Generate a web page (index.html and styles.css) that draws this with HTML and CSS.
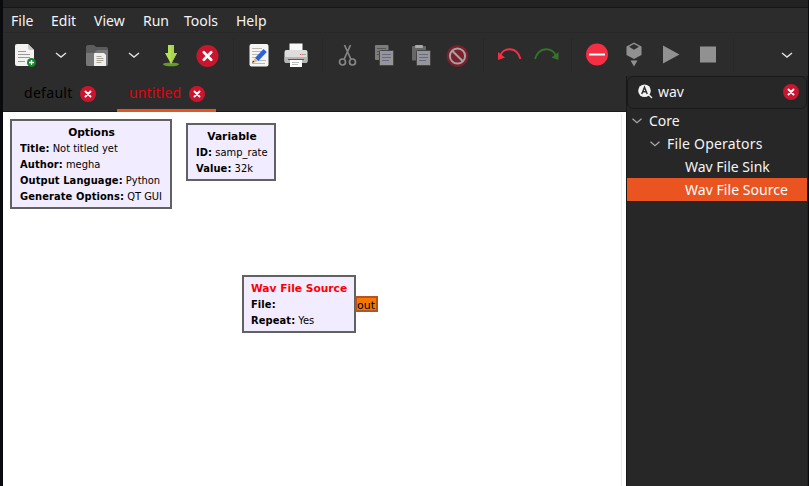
FILE: index.html
```html
<!DOCTYPE html>
<html lang="en">
<head>
<meta charset="utf-8">
<title>Flowgraph editor</title>
<link rel="stylesheet" href="styles.css">
</head>
<body>
<div class="window">
  <div class="titlebar"></div>
  <nav class="menu">
    <span class="m-file">File</span><span class="m-edit">Edit</span><span class="m-view">View</span><span class="m-run">Run</span><span class="m-tools">Tools</span><span class="m-help">Help</span>
  </nav>
  <div class="toolbar">
    <svg viewBox="0 0 28 28"><path d="M6 3h11l6 6v14q0 2-2 2H6q-2 0-2-2V5q0-2 2-2z" fill="#f3f3f2"/><path d="M17 3v4q0 2 2 2h4z" fill="#c9c9c7"/><path d="M7 10.500h8M7 13.500h12M7 16.500h12M7 20.500h7" stroke="#999" fill="none"/><circle cx="20.500" cy="21.500" r="4.500" fill="#12852a"/><path d="M20.500 19v5M18 21.500h5" stroke="#fff" stroke-width="1.300"/></svg>
    <svg viewBox="0 0 28 28"><path class="chev" d="M9 12l5 4 5-4"/></svg>
    <svg viewBox="0 0 28 28"><path d="M3 6q0-2 2-2h6l2 2h10q2 0 2 2v15q0 2-2 2H5q-2 0-2-2z" fill="#5c5c5c"/><path d="M3 12h8l3-3h11v14q0 2-2 2H5q-2 0-2-2z" fill="#787878"/><path d="M12 12h9l2 2v11H11V13q0-1 1-1z" fill="#efefed"/><path d="M13.500 15.500h5M13.500 17.500h7M13.500 19.500h7M13.500 21.500h5" stroke="#aaa496"/></svg>
    <svg viewBox="0 0 28 28"><path class="chev" d="M9 12l5 4 5-4"/></svg>
    <svg viewBox="0 0 28 28"><ellipse cx="14" cy="23.300" rx="8" ry="1.900" fill="#659b2b"/><path d="M11 4h6v8h3l-6 11-6-11h3z" fill="#b6df55"/><path d="M14 4h3v8h3l-6 11z" fill="#a9d64b"/></svg>
    <svg viewBox="0 0 28 28"><circle cx="13.500" cy="15" r="11" fill="#c9162e"/><path d="M9.800 11.300l7.400 7.400m0-7.400l-7.400 7.400" stroke="#fff" stroke-width="2.700" stroke-linecap="round"/></svg>
    <i class="sep"></i>
    <svg viewBox="0 0 28 28"><rect x="4.500" y="3" width="19" height="22.500" rx="2" fill="#f5f5f4"/><path d="M7 7.500h10M7 10.500h12M7 13.500h10M7 16.500h9M13 19.500h8M7 22.500h13" stroke="#bdb8ad"/><path d="M10 17l8.500-9 3.300 3-8.500 9z" fill="#2962d9"/><path d="M10 17l3.300 3-6.300 1.800z" fill="#efb66f"/><path d="M7 21.800l1-2.200 1.500 1.500z" fill="#333"/></svg>
    <svg viewBox="0 0 28 28"><rect x="7.500" y="2.500" width="13" height="9" fill="#fafafa"/><rect x="2.500" y="9" width="23" height="13" rx="2" fill="#ddd"/><path d="M2.500 16h23v4q0 2-2 2h-19q-2 0-2-2z" fill="#b5b5b4"/><path d="M6 18.500h16" stroke="#555"/><path d="M8 19h12v7H8z" fill="#fff"/><path d="M10 21.500h7M10 23.500h6" stroke="#bbb"/><path d="M18 13.500h1.300m1 0h1.300" stroke="#df5757"/><path d="M22.400 13.500h1.300" stroke="#43a85b"/></svg>
    <i class="sep"></i>
    <svg viewBox="0 0 28 28" fill="none" stroke="#858585" stroke-width="1.700"><circle cx="9.500" cy="21" r="3"/><circle cx="19.500" cy="21" r="3"/><path d="M11 18.500L17.500 4M18 18.500L11.500 4"/></svg>
    <svg viewBox="0 0 28 28"><rect x="5" y="4" width="13.500" height="15" rx="1" fill="#7c7c7c"/><path d="M7 7.500h9M7 10.500h4M7 13.500h3" stroke="#555"/><rect x="9.500" y="9.500" width="14" height="15" rx="1" fill="#969696" stroke="#454545"/><path d="M12 13.500h9M12 16.500h9M12 19.500h7" stroke="#68688f"/></svg>
    <svg viewBox="0 0 28 28"><rect x="5" y="5" width="14" height="14.500" rx="1" fill="#676767"/><rect x="8" y="4" width="8" height="3" rx="1" fill="#aaa"/><rect x="9.500" y="9.500" width="14" height="15" rx="1" fill="#969696" stroke="#454545"/><path d="M12 13.500h9M12 16.500h9M12 19.500h7" stroke="#68688f"/></svg>
    <svg viewBox="0 0 28 28"><circle cx="13.500" cy="15" r="10.800" fill="#7d202b"/><circle cx="13.500" cy="15" r="7.600" fill="none" stroke="#a3a3a3" stroke-width="2"/><path d="M8.200 9.700l10.600 10.600" stroke="#a3a3a3" stroke-width="2"/></svg>
    <i class="sep"></i>
    <svg viewBox="0 0 28 28"><path d="M5 15C8 6 22 5 25.500 18" fill="none" stroke="#f52e43" stroke-width="1.900"/><path d="M3 11v8l7-2.500z" fill="#f52e43"/></svg>
    <svg viewBox="0 0 28 28"><path d="M24 15C21 6 7 5 3 18" fill="none" stroke="#357329" stroke-width="1.900"/><path d="M26.500 11v8l-7-2.500z" fill="#357329"/></svg>
    <i class="sep"></i>
    <svg viewBox="0 0 28 28"><circle cx="14" cy="13.500" r="11" fill="#f52e43"/><rect x="6" y="12.500" width="16" height="2" fill="#fff"/></svg>
    <svg viewBox="0 0 28 28"><path d="M14 1.500l7.500 4V14L14 18l-7.500-4V5.500z" fill="#919191"/><path d="M14 3l5 2.800-5 2.900-5-2.900z" fill="#303030"/><path d="M10.500 19.500h7L14 25.500z" fill="#919191"/></svg>
    <svg viewBox="0 0 28 28"><path d="M6 4.500l16.500 9L6 22.500z" fill="#919191"/></svg>
    <svg viewBox="0 0 28 28"><rect x="6" y="5.500" width="16" height="16" fill="#919191"/></svg>
    <i class="sep"></i>
    <svg class="more" viewBox="0 0 28 28"><path class="chev" d="M9 12l5 4 5-4"/></svg>
  </div>
  <div class="main">
    <main class="editor">
      <div class="tabs">
        <div class="tab tab-default"><span>default</span><svg class="close" viewBox="0 0 16 16"><circle cx="8" cy="8" r="8" fill="#c9162e"/><path d="M5.500 5.500l5 5m0-5l-5 5" stroke="#fff" stroke-width="1.900" stroke-linecap="round"/></svg></div>
        <div class="tab tab-active"><span>untitled</span><svg class="close" viewBox="0 0 16 16"><circle cx="8" cy="8" r="8" fill="#c9162e"/><path d="M5.500 5.500l5 5m0-5l-5 5" stroke="#fff" stroke-width="1.900" stroke-linecap="round"/></svg></div>
      </div>
      <div class="canvas">
        <section class="block options"><h2>Options</h2><p><b>Title:</b> Not titled yet</p><p><b>Author:</b> megha</p><p><b>Output Language:</b> Python</p><p><b>Generate Options:</b> QT GUI</p></section>
        <section class="block variable"><h2>Variable</h2><p><b>ID:</b> samp_rate</p><p><b>Value:</b> 32k</p></section>
        <section class="block source"><h2>Wav File Source</h2><p><b>File:</b></p><p><b>Repeat:</b> Yes</p></section>
        <div class="port">out</div>
        <div class="scroll-edge"></div>
      </div>
    </main>
    <aside class="panel">
      <div class="search">
        <svg class="glass" viewBox="0 0 16 16"><path d="M10 10l4 4" stroke="#eee" stroke-width="1.500"/><circle cx="6.500" cy="6.800" r="6.300" fill="#f4f4f4"/><path d="M3.800 10L6.500 3.300 9.200 10M4.900 7.800h3.200" fill="none" stroke="#333" stroke-width="1.500"/></svg>
        <span class="query">wav</span>
        <svg class="close" viewBox="0 0 16 16"><circle cx="8" cy="8" r="8" fill="#c9162e"/><path d="M5.500 5.500l5 5m0-5l-5 5" stroke="#fff" stroke-width="1.900" stroke-linecap="round"/></svg>
      </div>
      <div class="row core"><svg viewBox="0 0 10 6"><path d="M.5.700L5 4.700 9.500.700"/></svg><span>Core</span></div>
      <div class="row ops"><svg viewBox="0 0 10 6"><path d="M.5.700L5 4.700 9.500.700"/></svg><span>File Operators</span></div>
      <div class="row leaf sink"><span>Wav File Sink</span></div>
      <div class="row leaf selected"><span>Wav File Source</span></div>
    </aside>
  </div>
</div>
</body>
</html>
```
FILE: styles.css
```css
* { box-sizing: border-box; }
body { margin: 0; background: #080a0d; font: 14px/20px "Noto Sans", sans-serif; color: #f4f4f4; overflow: hidden; }
svg { display: block; flex: none; }
.window { width: 805px; height: 486px; margin-left: 3px; background: #2c2c2c; display: flex; flex-direction: column; }
.titlebar { height: 8px; background: #222; border-bottom: 1px solid #161616; }
.menu { height: 25px; display: flex; align-items: center; padding: 2px 0 0 8px; border-bottom: 1px solid #282828; }
.m-file { width: 40px; }
.m-edit { width: 43px; }
.m-view { width: 49px; }
.m-run { width: 41px; }
.m-tools { width: 52px; }
.toolbar { height: 43px; padding: 0 8px 0 5px; display: grid; align-items: center; justify-items: center; grid-template-columns: 34px 37px 36px 38px 36px 37px 15px 36px 38px 14px 36px 38px 36px 37px 15px 36px 38px 13px 38px 36px 38px 36px 15px 1fr; }
.toolbar svg { width: 28px; height: 28px; }
.toolbar .more { justify-self: end; margin-right: -1px; }
.chev { fill: none; stroke: #e2e2e2; stroke-width: 1.4; }
.sep { width: 1px; height: 34px; background: #282828; }
.main { flex: 1; display: flex; min-height: 0; }
.editor { width: 623px; display: flex; flex-direction: column; }
.tabs { height: 36px; display: flex; border-bottom: 1px solid #1b1b1b; }
.tab { height: 36px; display: flex; align-items: center; justify-content: space-between; }
.tab span { margin-top: -2px; }
.tab-default { width: 72px; height: 35px; margin-left: 21px; color: #000; letter-spacing: .3px; }
.tab-active { width: 99px; margin-left: 21px; padding: 2px 11px 0 12px; color: #e8000b; border-bottom: 3px solid #e95420; letter-spacing: .15px; position: relative; }
.close { width: 16px; height: 16px; }
.canvas { position: relative; flex: 1; background: #fff; color: #000; font: 11px/16px "DejaVu Sans Condensed", "DejaVu Sans", sans-serif; }
.block { position: absolute; border: 2px solid #616161; background: #f1ecff; padding: 4px 7px 0 8px; white-space: nowrap; overflow: hidden; }
.block h2 { margin: 0; text-align: center; font: bold 10.67px/16px "DejaVu Sans", sans-serif; }
.block b { font: bold 11px/16px "DejaVu Sans Condensed", "DejaVu Sans", sans-serif; letter-spacing: .1px; }
.block p { margin: 0; height: 16px; overflow: hidden; }
.options { left: 7px; top: 7px; width: 162px; height: 90px; }
.variable { left: 183px; top: 11px; width: 90px; height: 58px; padding-right: 6px; }
.source { left: 239px; top: 163px; width: 114px; height: 58px; padding-left: 7px; }
.source h2 { color: #f00; }
.port { position: absolute; left: 352px; top: 184px; width: 23px; height: 16px; border: 2px solid #b8521f; background: #f57900; font: 11px/15px "DejaVu Sans", sans-serif; text-align: center; text-indent: -1px; }
.scroll-edge { position: absolute; top: 2px; right: 4px; bottom: 0; width: 1px; background: #ececec; }
.panel { width: 182px; background: #272727; border-left: 1px solid #181818; border-right: 1px solid #202020; }
.search { height: 33px; display: flex; align-items: center; padding: 0 7px 2px 10px; border: 1px solid #191919; border-radius: 6px; }
.glass { width: 16px; height: 16px; }
.query { flex: 1; margin-left: 4px; }
.row { height: 23px; display: flex; align-items: center; white-space: nowrap; }
.row svg { width: 10px; height: 6px; fill: none; stroke: #aaa; stroke-width: 1.2; }
.core { padding-left: 5px; gap: 7px; }
.ops { padding-left: 23px; gap: 7px; letter-spacing: .2px; }
.leaf { padding-left: 58px; }
.selected { background: #e95420; color: #fff; letter-spacing: .05px; }
```
